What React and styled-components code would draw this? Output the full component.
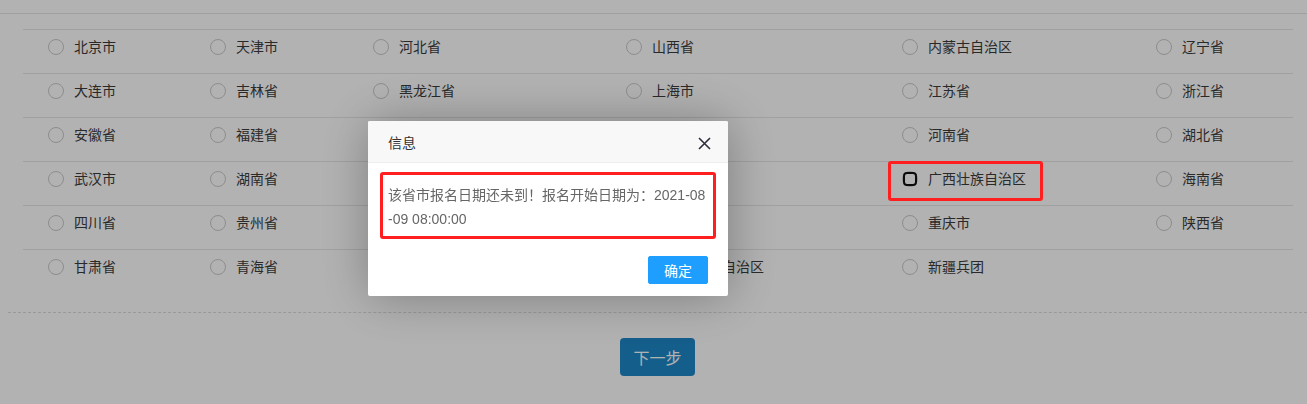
import React from "react";
import styled, { createGlobalStyle } from "styled-components";

const GlobalStyle = createGlobalStyle`
  html, body {
    margin: 0;
    padding: 0;
    background: #fff;
    font-family: "Liberation Sans", "Noto Sans CJK SC", sans-serif;
    font-size: 14px;
    color: #444;
  }
`;

const Page = styled.div`
  width: 1307px;
  height: 404px;
  overflow: hidden;
`;

const TopBar = styled.div`
  height: 13px;
  border-bottom: 1px solid #e6e6e6;
`;

const Table = styled.div`
  margin: 15px 0 0 23px;
  width: 1270px;
`;

const Row = styled.div`
  display: grid;
  grid-template-columns: 162px 163px 253px 276px 254px 162px;
  height: 43px;
  border-top: 1px solid #e6e6e6;
`;

const Cell = styled.label`
  display: flex;
  align-items: center;
  gap: 10px;
  height: 20px;
  padding: 7px 0 0 25px;
  line-height: 20px;
  white-space: nowrap;
  color: #3c3c3c;
`;

const Radio = styled.span`
  position: relative;
  flex: none;
  width: 14px;
  height: 14px;
  border: 1px solid #cacaca;
  border-radius: 50%;
  background: #fff;

  &::after {
    content: "";
    display: ${(p) => (p.$focused ? "block" : "none")};
    position: absolute;
    left: 0px;
    top: 0px;
    width: 10px;
    height: 10px;
    border: 2px solid #111;
    border-radius: 4px;
  }
`;

const Footer = styled.div`
  margin: 19px 0 0 8px;
  border-top: 1px dashed #dcdcdc;
  padding-top: 25px;
  display: flex;
  justify-content: center;
`;

const NextButton = styled.button`
  height: 38px;
  padding: 0 13px;
  border: none;
  border-radius: 4px;
  background: #1d87c8;
  color: #fff;
  font-family: "Noto Sans CJK SC", sans-serif;
  font-size: 16px;
  cursor: pointer;
`;

const Shade = styled.div`
  position: fixed;
  inset: 0;
  background: rgba(0, 0, 0, 0.3);
  z-index: 10;
`;

const Dialog = styled.div`
  position: fixed;
  left: 368px;
  top: 121px;
  width: 360px;
  background: #fff;
  border-radius: 2px;
  box-shadow: 1px 1px 50px rgba(0, 0, 0, 0.3);
  z-index: 20;
`;

const DialogTitle = styled.div`
  position: relative;
  height: 41px;
  line-height: 42px;
  padding: 0 80px 0 20px;
  border-bottom: 1px solid #eee;
  background: #f8f8f8;
  color: #333;
  font-family: "Noto Sans CJK SC", sans-serif;
  font-size: 14px;
  border-radius: 2px 2px 0 0;
`;

const CloseButton = styled.span`
  position: absolute;
  right: 17px;
  top: 16px;
  width: 13px;
  height: 13px;
  display: flex;
`;

const DialogBody = styled.div`
  position: relative;
  padding: 20px;
  line-height: 24px;
  color: #666;
  font-size: 14px;
  word-break: break-all;
`;

const Highlight = styled.div`
  position: absolute;
  border: 3px solid #ff1f1f;
  border-radius: 3px;
  pointer-events: none;
`;

const DialogFooter = styled.div`
  display: flex;
  justify-content: flex-end;
  padding: 0 15px 12px;
`;

const ConfirmButton = styled.button`
  height: 28px;
  margin: 5px 5px 0;
  padding: 0 15px;
  border: 1px solid #1e9fff;
  border-radius: 2px;
  background: #1e9fff;
  color: #fff;
  font-family: "Noto Sans CJK SC", sans-serif;
  font-size: 14px;
  line-height: 26px;
`;

const AnnotationLayer = styled.div`
  position: fixed;
  inset: 0;
  z-index: 30;
  pointer-events: none;
`;

// cells hidden behind the dialog are left blank
const rows = [
  ["北京市", "天津市", "河北省", "山西省", "内蒙古自治区", "辽宁省"],
  ["大连市", "吉林省", "黑龙江省", "上海市", "江苏省", "浙江省"],
  ["安徽省", "福建省", null, null, "河南省", "湖北省"],
  ["武汉市", "湖南省", null, null, "广西壮族自治区", "海南省"],
  ["四川省", "贵州省", null, null, "重庆市", "陕西省"],
  ["甘肃省", "青海省", null, "新疆维吾尔自治区", "新疆兵团", null],
];

function CloseIcon() {
  return (
    <svg width="13" height="13" viewBox="0 0 13 13">
      <path d="M1 1 L12 12 M12 1 L1 12" stroke="#2e2d3c" strokeWidth="1.6" fill="none" />
    </svg>
  );
}

export default function App() {
  return (
    <Page>
      <GlobalStyle />
      <TopBar />
      <Table>
        {rows.map((row, i) => (
          <Row key={i}>
            {row.map((name, j) =>
              name ? (
                <Cell key={j}>
                  <Radio $focused={name === "广西壮族自治区"} />
                  {name}
                </Cell>
              ) : (
                <div key={j} />
              )
            )}
          </Row>
        ))}
      </Table>
      <Footer>
        <NextButton>下一步</NextButton>
      </Footer>

      <Shade />
      <Dialog>
        <DialogTitle>
          信息
          <CloseButton>
            <CloseIcon />
          </CloseButton>
        </DialogTitle>
        <DialogBody>
          该省市报名日期还未到！报名开始日期为：2021-08-09 08:00:00
          <Highlight style={{ left: 12, top: 9, width: 330, height: 61 }} />
        </DialogBody>
        <DialogFooter>
          <ConfirmButton>确定</ConfirmButton>
        </DialogFooter>
      </Dialog>

      <AnnotationLayer>
        <Highlight style={{ left: 888, top: 161, width: 149, height: 34 }} />
      </AnnotationLayer>
    </Page>
  );
}
